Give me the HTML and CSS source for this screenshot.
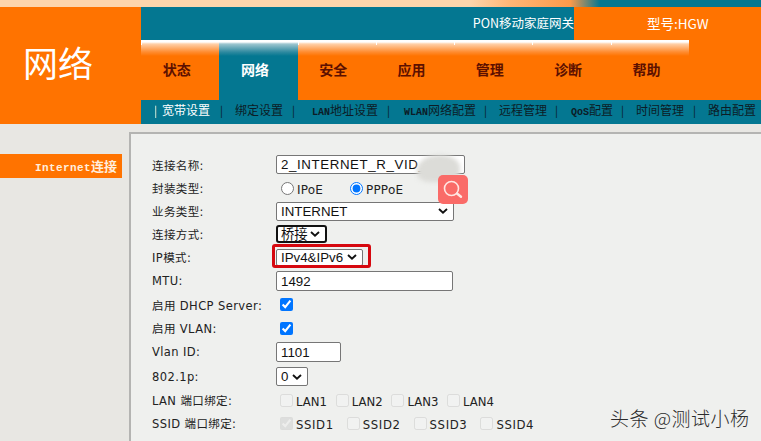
FILE: index.html
```html
<!DOCTYPE html>
<html lang="zh">
<head>
<meta charset="utf-8">
<title>网络</title>
<link rel="stylesheet" href="styles.css">
</head>
<body>
<header class="top">
  <div class="strip"></div>
  <div class="head">
    <div class="brand">网络</div>
    <div class="headmain">
      <div class="titlebar">
        <span class="product">PON移动家庭网关</span>
        <span class="model">型号:HGW</span>
      </div>
      <nav class="tabs">
        <a class="tab">状态</a><a class="tab on">网络</a><a class="tab">安全</a><a class="tab">应用</a><a class="tab">管理</a><a class="tab">诊断</a><a class="tab">帮助</a><span class="tabfill"></span>
      </nav>
      <nav class="subnav">
        <span class="sub first">宽带设置</span><span class="sub s2">绑定设置</span><span class="sub s3"><span class="lat">LAN</span>地址设置</span><span class="sub s4"><span class="lat">WLAN</span>网络配置</span><span class="sub s5">远程管理</span><span class="sub s6"><span class="lat">QoS</span>配置</span><span class="sub s7">时间管理</span><span class="sub s8">路由配置</span>
      </nav>
    </div>
  </div>
</header>
<main class="body">
  <aside class="side"><div class="sideitem"><span class="sideen">Internet</span><span class="sidecn">连接</span></div></aside>
  <section class="panel">
    <div class="row"><label class="lab">连接名称:</label><input class="field wide f189" value="2_INTERNET_R_VID_"></div>
    <div class="row"><label class="lab">封装类型:</label><span class="opts radios"><input type="radio" name="m"><span class="rl r1">IPoE</span><input type="radio" name="m" checked><span class="rl">PPPoE</span></span></div>
    <div class="row"><label class="lab">业务类型:</label><select class="sel s178"><option>INTERNET</option></select></div>
    <div class="row up"><label class="lab">连接方式:</label><select class="sel focus"><option>桥接</option></select></div>
    <div class="row"><label class="lab">IP模式:</label><select class="sel ipm"><option>IPv4&amp;IPv6</option></select></div>
    <div class="row down"><label class="lab">MTU:</label><input class="field f177" value="1492"></div>
    <div class="row"><label class="lab">启用 DHCP Server:</label><input class="chk" type="checkbox" checked></div>
    <div class="row"><label class="lab">启用 VLAN:</label><input class="chk" type="checkbox" checked></div>
    <div class="row down"><label class="lab">Vlan ID:</label><input class="field f65" value="1101"></div>
    <div class="row down"><label class="lab">802.1p:</label><select class="sel s32"><option>0</option></select></div>
    <div class="row"><label class="lab">LAN 端口绑定:</label><span class="opts ports"><span class="p"><input type="checkbox" disabled>LAN1</span><span class="p"><input type="checkbox" disabled>LAN2</span><span class="p"><input type="checkbox" disabled>LAN3</span><span class="p"><input type="checkbox" disabled>LAN4</span></span></div>
    <div class="row"><label class="lab">SSID 端口绑定:</label><span class="opts ports ssid"><span class="p"><input type="checkbox" disabled checked>SSID1</span><span class="p"><input type="checkbox" disabled>SSID2</span><span class="p"><input type="checkbox" disabled>SSID3</span><span class="p"><input type="checkbox" disabled>SSID4</span></span></div>
  </section>
</main>
<div class="redbox"></div>
<div class="smudge"></div>
<div class="search"><svg width="30" height="29" viewBox="0 0 30 29"><circle cx="13.5" cy="13.5" r="7" fill="none" stroke="#ffe6e2" stroke-width="1.6"/><path d="M19 18.5l4 3.2" stroke="#ffe6e2" stroke-width="2.4" stroke-linecap="round"/></svg></div>
<div class="mark">头条 @测试小杨</div>
</body>
</html>
```

FILE: styles.css
```css
html, body { margin: 0; height: 100%; }
body { width: 761px; height: 441px; overflow: hidden; background: #e8e7e3; font-family: "Noto Sans CJK SC", "DejaVu Sans", sans-serif; position: relative; }
.strip { height: 7px; background: linear-gradient(90deg, #fdd5ac 0, #fdd5ac 470px, #ffb676 510px, #fd9a4a 570px, #047791 600px); }
.head { display: flex; height: 117px; }
.brand { width: 141px; background: #ff7300; color: #fff; font-size: 35px; line-height: 110px; text-align: center; box-sizing: border-box; padding-right: 25px; }
.headmain { flex: 1; display: flex; flex-direction: column; background: #047791; min-width: 0; }
.titlebar { height: 33px; display: flex; justify-content: flex-end; color: #fff; font-size: 12.5px; line-height: 32px; }
.product { white-space: nowrap; }
.model { width: 187px; background: #ff7300; box-sizing: border-box; padding-left: 73px; font-size: 13.5px; }
.tabs { height: 60px; display: flex; background: #ff7300; }
.tab { width: 78.3px; flex: none; color: #5c1000; font-size: 14px; font-weight: 700; line-height: 58px; padding-right: 7px; box-sizing: border-box; text-align: center; background: linear-gradient(#fff, #fff) left top / 1px 5px no-repeat, linear-gradient(#fff 0, #fff 2px, #ffd0a8 4px, #ff8c30 12px, #ff7300 16px); }
.tab.on { color: #fff; background: linear-gradient(#fff 0, #fff 2px, #9cc5cf 4px, #2f8aa0 12px, #047791 16px); }
.tabfill { flex: 1; }
.subnav { height: 24px; display: flex; color: #0c1c26; font-size: 12px; line-height: 20px; white-space: nowrap; overflow: hidden; margin-left: 14px; }
.sub { flex: none; box-sizing: border-box; position: relative; }
.sub::before { content: "|"; position: absolute; left: -1px; font-size: 11px; }
.lat { font-family: "Liberation Mono", monospace; font-size: 10px; font-weight: 700; }
.first { width: 66px; padding-left: 7px; color: #fff; }
.s2 { width: 72px; padding-left: 14px; }
.s3 { width: 95px; padding-left: 19px; }
.s4 { width: 97px; padding-left: 16px; }
.s5 { width: 71px; padding-left: 14px; }
.s6 { width: 66px; padding-left: 15px; }
.s7 { width: 72px; padding-left: 14px; }
.s8 { width: 72px; padding-left: 14px; }
.body { display: flex; align-items: flex-start; }
.side { width: 122px; margin-top: 30px; flex: none; }
.sideitem { height: 24px; background: #ff7300; color: #ffeedd; font-family: "Liberation Mono", monospace; font-weight: 700; font-size: 11px; line-height: 24px; text-align: right; padding-right: 5px; box-sizing: border-box; }
.sideen { letter-spacing: .4px; }
.sidecn { font-family: "Noto Sans CJK SC", sans-serif; font-size: 13px; }
.panel { margin: 8px 0 0 7px; flex: 1; height: 320px; background: #eff0ee; box-sizing: border-box; padding: 19px 0 0 21px; border-top: 2px solid #b4b4b2; border-left: 2px solid #b4b4b2; color: #222; font-size: 12px; }
.row { height: 23.35px; display: flex; align-items: center; }
.up { margin-top: -1px; }
.down { margin-top: 1px; }
.lab { width: 124px; flex: none; white-space: nowrap; letter-spacing: .4px; font-family: "DejaVu Sans", "Noto Sans CJK SC", sans-serif; font-size: 11.5px; }
.field, .sel { font-family: "Liberation Sans", "Noto Sans CJK SC", sans-serif; font-size: 13.3px; box-sizing: border-box; height: 19px; background-color: #fff; border: 1px solid #767676; border-radius: 2px; color: #111; margin: 0; }
.field { padding: 0 4px; letter-spacing: 0; }
.wide { letter-spacing: .6px; }
.sel { appearance: none; padding: 0 4px; letter-spacing: 0; background-image: url("data:image/svg+xml,%3Csvg xmlns='http://www.w3.org/2000/svg' width='10' height='6'%3E%3Cpath d='M1 1l4 3.6L9 1' fill='none' stroke='%23111' stroke-width='1.9'/%3E%3C/svg%3E"); background-repeat: no-repeat; background-position: right 5px center; }
.f189 { width: 189px; }
.f177 { width: 177px; height: 20px; }
.s178 { width: 178px; }
.f65 { width: 65px; height: 20px; }
.s32 { width: 32px; }
.focus { width: 51px; height: 18px; padding: 0 3px; border: 2px solid #111; border-radius: 3px; }
.ipm { width: 87px; height: 17px; }
.opts { display: flex; align-items: center; font-family: "DejaVu Sans", sans-serif; }
.radios { letter-spacing: .2px; margin-left: -1px; }
.radios input { margin: 0 0 0 6px; width: 13px; height: 13px; }
.rl { margin: 4px 0 0 3px; }
.r1 { width: 47px; }
.chk { margin: 0 0 0 4px; width: 13px; height: 13px; }
.ports { font-size: 11.7px; padding-top: 4px; }
.p { display: inline-flex; align-items: center; width: 55.7px; }
.ssid { letter-spacing: .6px; }
.ssid .p { width: 66.8px; }
.p input { margin: 0 3px 4px 4px; width: 13px; height: 13px; opacity: .55; }
.redbox { position: absolute; left: 272px; top: 244px; width: 93px; height: 18px; border: 3px solid #d6080f; border-radius: 3px; }
.smudge { position: absolute; left: 417px; top: 155px; width: 43px; height: 27px; border-radius: 60% 50% 45% 35%; background: #dcdcd8; filter: blur(2px); }
.search { position: absolute; left: 438px; top: 175px; width: 30px; height: 29px; border-radius: 5px; background: #fa6b68; display: flex; }
.mark { position: absolute; left: 610px; top: 406px; font-size: 19px; line-height: 24px; letter-spacing: .5px; color: #2c2c2c; white-space: nowrap; font-weight: 300; }
```
